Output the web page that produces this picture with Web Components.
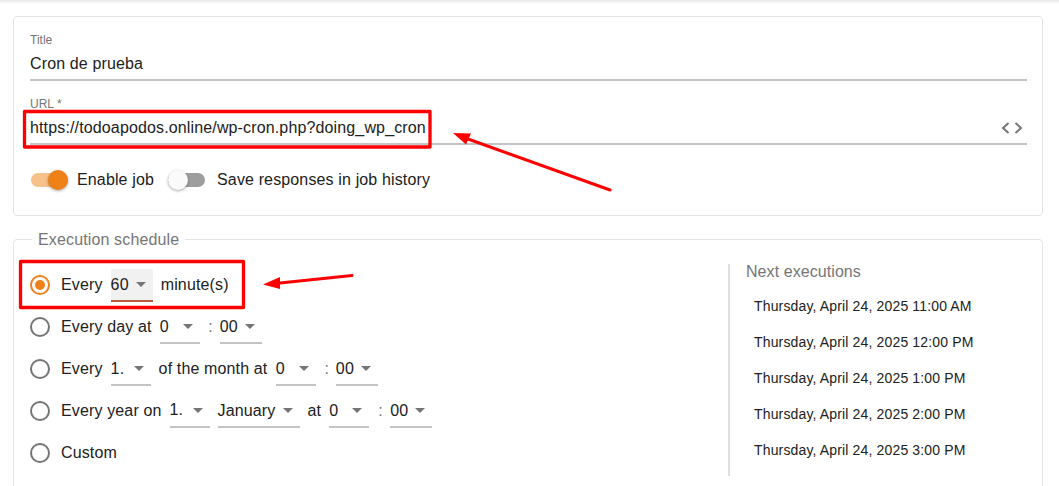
<!DOCTYPE html>
<html>
<head>
<meta charset="utf-8">
<title>Cron job</title>
<style>
  html, body { margin: 0; height: 486px; overflow: hidden; background: #fff; }
  body { position: relative; font-family: "Liberation Sans", Arial, sans-serif; color: #212121; font-size: 16px; letter-spacing: .14px; }
  .sched-left { display: block; }
</style>
</head>
<body>
<job-page>
  <form-card slot="settings">
    <text-field label="Title" value="Cron de prueba"></text-field>
    <text-field label="URL *" value="https://todoapodos.online/wp-cron.php?doing_wp_cron" code></text-field>
    <toggle-row></toggle-row>
  </form-card>
  <schedule-card slot="schedule" legend="Execution schedule">
    <div slot="left" class="sched-left">
      <radio-row checked>Every<select-box value="60" focused style="margin-left:8px"></select-box><span style="margin-left:8px">minute(s)</span></radio-row>
      <radio-row>Every day at<select-box value="0" style="margin-left:8px"></select-box><time-colon></time-colon><select-box value="00"></select-box></radio-row>
      <radio-row>Every<select-box value="1." style="margin-left:8px"></select-box><span style="margin:0 8.400px 0 8px">of the month at</span><select-box value="0"></select-box><time-colon></time-colon><select-box value="00"></select-box></radio-row>
      <radio-row>Every year on<select-box value="1." style="margin:0 8px"></select-box><select-box value="January" style="min-width:82px"></select-box><span style="margin:0 8px">at</span><select-box value="0"></select-box><time-colon style="width:21px"></time-colon><select-box value="00"></select-box></radio-row>
      <radio-row>Custom</radio-row>
    </div>
    <next-runs slot="right">
      <div>Thursday, April 24, 2025 11:00 AM</div>
      <div>Thursday, April 24, 2025 12:00 PM</div>
      <div>Thursday, April 24, 2025 1:00 PM</div>
      <div>Thursday, April 24, 2025 2:00 PM</div>
      <div>Thursday, April 24, 2025 3:00 PM</div>
    </next-runs>
  </schedule-card>
</job-page>
<red-marks></red-marks>

<script>
// simple helper, every element just sets its html in the constructor
function shadow(el, html) {
  el.attachShadow({ mode: "open" }).innerHTML = html;
}

customElements.define("job-page", class extends HTMLElement {
  constructor() {
    super();
    shadow(this, `
      <style>
        :host { display: block; }
        .topbar { height: 4px; background: linear-gradient(#e9e9e9, #fff); }
        .wrap { padding: 12px 16px 0 13px; display: flex; flex-direction: column; gap: 15px; }
      </style>
      <div class="topbar"></div>
      <div class="wrap">
        <slot name="settings"></slot>
        <slot name="schedule"></slot>
      </div>`);
  }
});

customElements.define("form-card", class extends HTMLElement {
  constructor() {
    super();
    shadow(this, `
      <style>
        :host {
          display: block; box-sizing: border-box; height: 200px;
          border: 1px solid #e4e4e4; border-radius: 4px;
          padding: 16px 15px 0 16px;
        }
      </style>
      <slot></slot>`);
  }
});

customElements.define("text-field", class extends HTMLElement {
  constructor() {
    super();
    const code = this.hasAttribute("code") ? `
      <svg width="22" height="14" viewBox="0 0 22 14" fill="none" stroke="#757575" stroke-width="2" style="margin-top:2px">
        <path d="M7.5 2 2 7l5.500 5M14.500 2 20 7l-5.500 5"/>
      </svg>` : "";
    shadow(this, `
      <style>
        :host { display: block; height: 64px; box-sizing: border-box; }
        label { display: block; font-size: 12px; line-height: 14px; color: #757575; letter-spacing: 0; }
        .line {
          display: flex; align-items: center; justify-content: space-between;
          height: 32px; border-bottom: 2px solid #c4c4c4;
          padding-right: 4px; line-height: 32px;
        }
        .line span { padding-top: 2px; line-height: 30px; }
      </style>
      <label>${this.getAttribute("label")}</label>
      <div class="line"><span>${this.getAttribute("value")}</span>${code}</div>`);
  }
});

customElements.define("toggle-row", class extends HTMLElement {
  constructor() {
    super();
    shadow(this, `
      <style>
        :host { display: flex; align-items: center; height: 22px; margin-top: 8px; padding-left: 1px; }
        .sw { position: relative; width: 37px; height: 14px; border-radius: 7px; flex: none; }
        .sw i { position: absolute; top: -3px; width: 20px; height: 20px; border-radius: 50%;
                box-shadow: 0 1px 3px rgba(0,0,0,.35); }
        .on { background: #f8c08a; margin-right: 9px; }
        .on i { right: 0; background: #f08018; }
        .off { background: #9e9e9e; margin-left: 14px; margin-right: 12px; }
        .off i { left: 0; background: #fafafa; }
      </style>
      <span class="sw on"><i></i></span><span>Enable job</span>
      <span class="sw off"><i></i></span><span>Save responses in job history</span>`);
  }
});

customElements.define("schedule-card", class extends HTMLElement {
  constructor() {
    super();
    shadow(this, `
      <style>
        :host { display: block; }
        fieldset {
          margin: 0; padding: 16px 16px 0 6px; height: 300px; box-sizing: border-box;
          border: 1px solid #e4e4e4; border-radius: 4px;
          display: grid; grid-template-columns: 1fr 298px;
        }
        legend { padding: 0 6px; margin-left: 12px; font-size: 16px; line-height: 17px; color: #757575; }
      </style>
      <fieldset>
        <legend>${this.getAttribute("legend")}</legend>
        <slot name="left"></slot>
        <slot name="right"></slot>
      </fieldset>`);
  }
});

customElements.define("radio-row", class extends HTMLElement {
  constructor() {
    super();
    const on = this.hasAttribute("checked");
    const c = on ? "#f08018" : "#757575";
    shadow(this, `
      <style>
        :host { display: flex; align-items: center; height: 42px; white-space: nowrap; }
        svg { flex: none; margin: 0 11px 0 10px; }
      </style>
      <svg width="20" height="20" viewBox="0 0 20 20">
        <circle cx="10" cy="10" r="9" fill="none" stroke="${c}" stroke-width="2"/>
        ${on ? `<circle cx="10" cy="10" r="5" fill="${c}"/>` : ""}
      </svg>
      <slot></slot>`);
  }
});

customElements.define("select-box", class extends HTMLElement {
  constructor() {
    super();
    const focused = this.hasAttribute("focused");
    shadow(this, `
      <style>
        :host {
          display: inline-flex; align-items: center; position: relative; box-sizing: border-box;
          height: 33px; min-width: 40px; padding-right: 24px; margin-top: 1px;
          border-bottom: 2px solid ${focused ? "#b85c3c" : "#c4c4c4"};
          ${focused ? "background: #f1f1f1;" : ""}
        }
        i { position: absolute; right: 7px; top: 13px; width: 0; height: 0;
            border: 5px solid transparent; border-top-color: #757575; border-bottom: 0; }
      </style>
      <span>${this.getAttribute("value")}</span><i></i>`);
  }
});

customElements.define("time-colon", class extends HTMLElement {
  constructor() {
    super();
    shadow(this, `<style>:host { display: inline-block; box-sizing: border-box; width: 20px; padding-left: 2px; text-align: center; color: #757575; }</style>:`);
  }
});

customElements.define("next-runs", class extends HTMLElement {
  constructor() {
    super();
    shadow(this, `
      <style>
        :host { display: block; height: 212px; box-sizing: border-box; border-left: 2px solid #e0e0e0;
                padding: 0 0 0 16px; }
        h4 { margin: -1px 0 0; font-weight: normal; font-size: 16px; line-height: 18px; color: #757575; letter-spacing: .07px; }
        .list { padding: 7px 0 0 8px; font-size: 14px; line-height: 36px; letter-spacing: .15px; }
      </style>
      <h4>Next executions</h4>
      <div class="list"><slot></slot></div>`);
  }
});

// annotations drawn on top of the screenshot
customElements.define("red-marks", class extends HTMLElement {
  constructor() {
    super();
    shadow(this, `
      <style>
        :host { position: absolute; left: 0; top: 0; width: 1059px; height: 486px; pointer-events: none; }
        svg { display: block; }
      </style>
      <svg width="1059" height="486" viewBox="0 0 1059 486">
        <g fill="none" stroke="#fe0000" stroke-width="3.300" stroke-linejoin="round">
          <rect x="24.500" y="111.500" width="405.500" height="35.500"/>
          <rect x="20.500" y="261.500" width="223" height="46"/>
        </g>
        <g stroke="#fe0000" stroke-width="3" stroke-linecap="round">
          <path d="M610 190 468 139"/>
          <path d="M352 275.500 280 283"/>
        </g>
        <g fill="#fe0000">
          <path d="M453 133 471 133.500 466 144.500z"/>
          <path d="M263 284.500 280 277 280 289z"/>
        </g>
      </svg>`);
  }
});
</script>
</body>
</html>
